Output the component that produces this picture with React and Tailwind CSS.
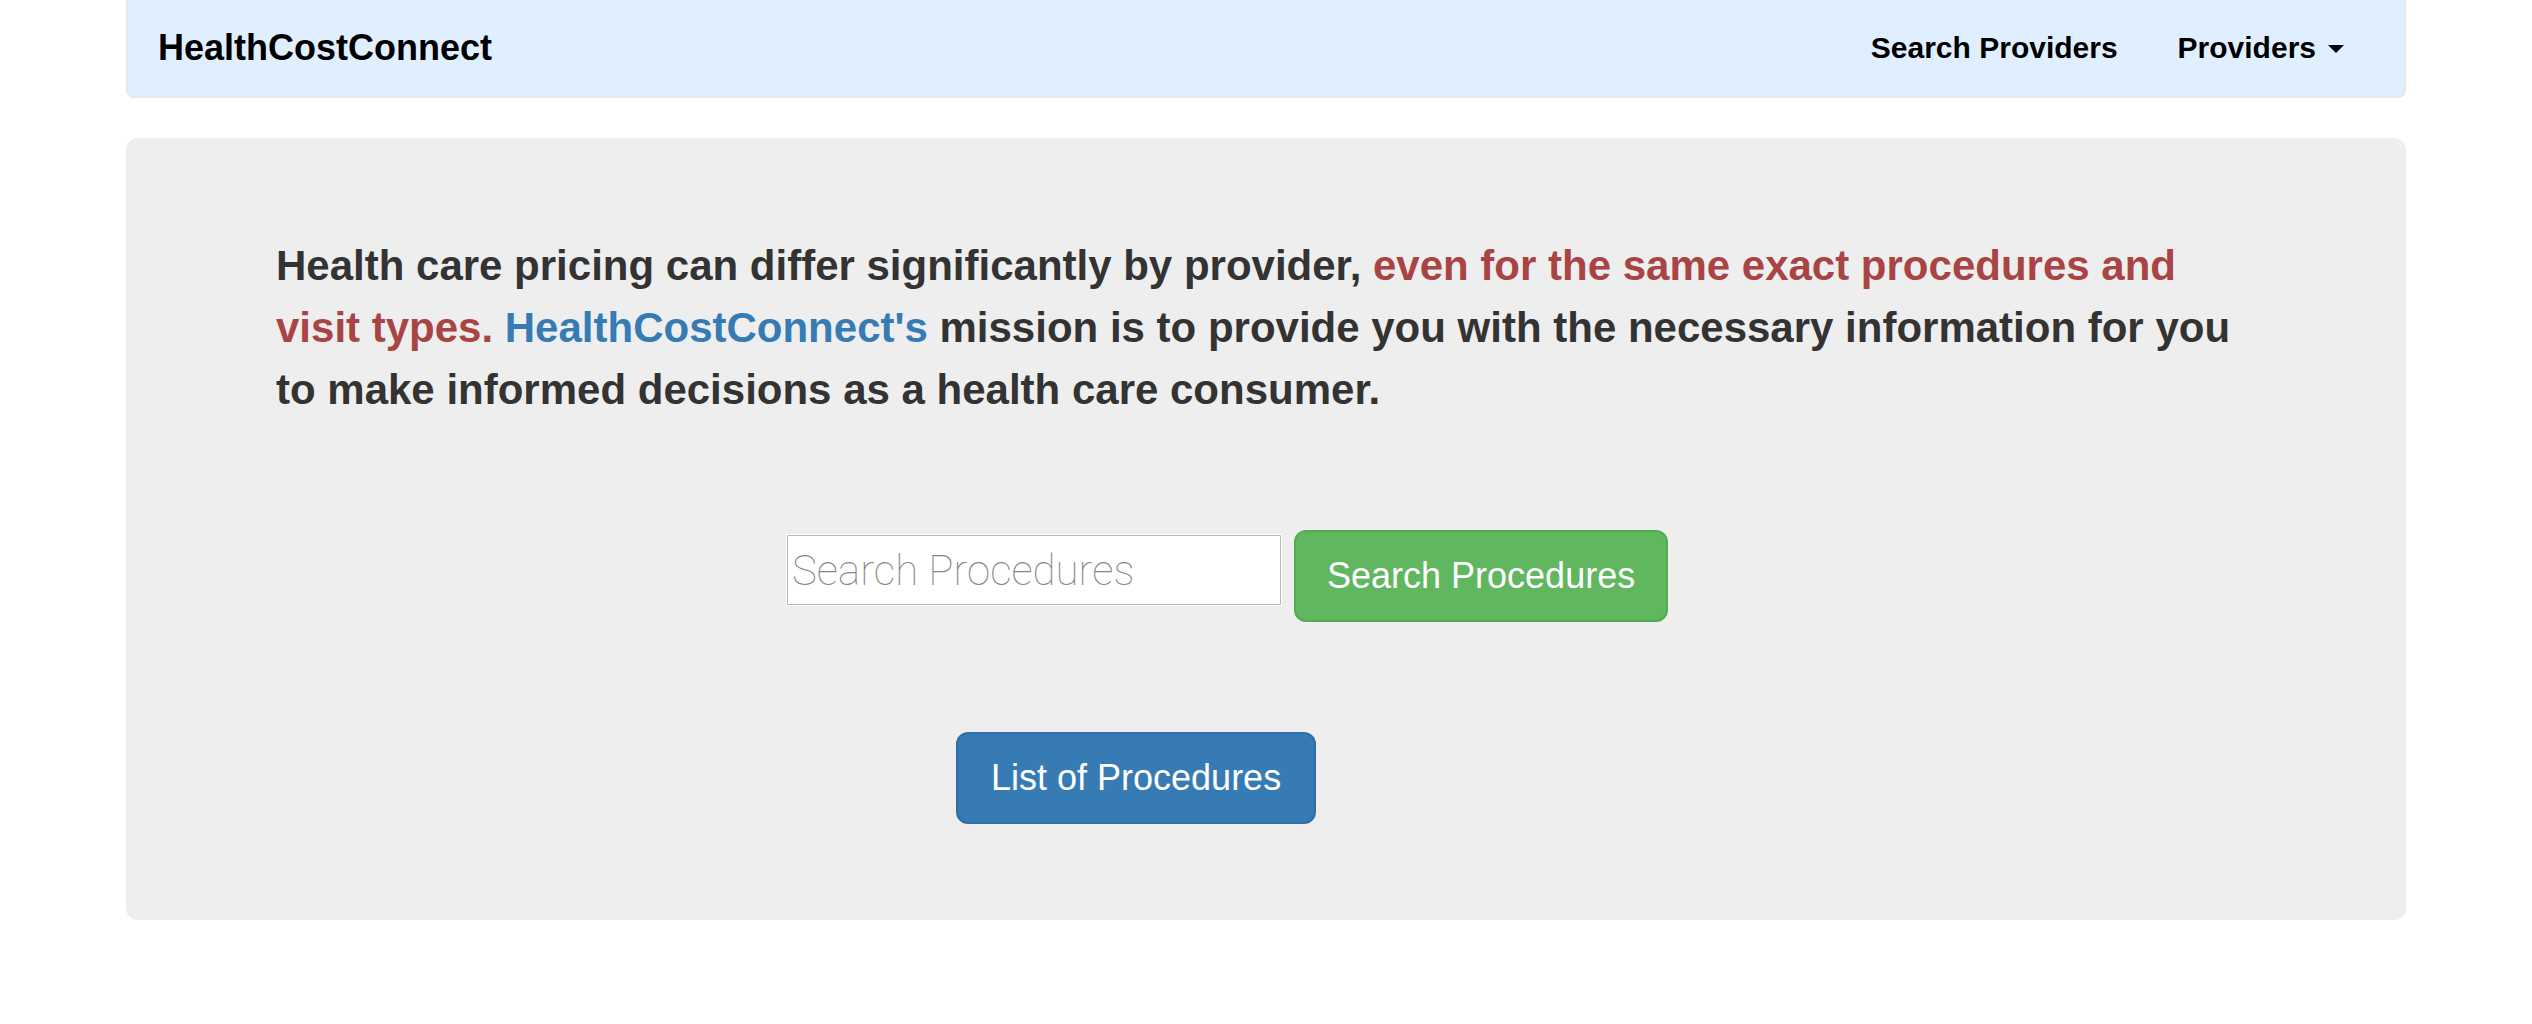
export default function App() {
  return (
    <div className="px-[126px] font-['Liberation_Sans',Arial,sans-serif] text-[#333]">
      <nav className="flex h-[98px] items-center justify-between rounded-b-lg border-2 border-t-0 border-[#e7e7e7] bg-[#e0efff] px-[30px] font-bold text-black">
        <a href="#home" className="text-[36px]">HealthCostConnect</a>
        <div className="flex items-center gap-[60px] pr-[30px] pb-[2px] text-[30px]">
          <a href="#search">Search Providers</a>
          <button type="button" className="flex items-center gap-3">
            Providers
            <span className="mt-1 border-x-8 border-t-8 border-x-transparent border-t-black" />
          </button>
        </div>
      </nav>
      <main className="mt-10 rounded-xl bg-[#eee] px-[150px] pt-[97px] pb-[96px]">
        <p className="text-[42px] leading-[62px] font-bold">
          Health care pricing can differ significantly by provider,{" "}
          <span className="text-[#a84444]">even for the same exact procedures and visit types.</span>{" "}
          <span className="text-[#377bb5]">HealthCostConnect's</span> mission is to provide you with the necessary information for you to make informed decisions as a health care consumer.
        </p>
        <form className="mt-[109px] ml-[510px] flex items-start gap-[12px]">
          <div className="mt-1 border border-white">
            <input aria-label="Search Procedures" placeholder="Search Procedures" className="block h-[70px] w-[494px] border border-[#b8b8b8] bg-white px-1 font-['Roboto',sans-serif] text-[42px] font-thin placeholder:text-[#888]" />
          </div>
          <button type="button" className="h-[92px] rounded-xl border-2 border-[#4fae50] bg-[#60b760] px-[31px] text-[36px] text-white">Search Procedures</button>
        </form>
        <button type="button" className="mt-[110px] ml-[680px] h-[92px] rounded-xl border-2 border-[#316ea3] bg-[#377bb5] px-[33px] text-[36px] text-white">List of Procedures</button>
      </main>
    </div>
  );
}
